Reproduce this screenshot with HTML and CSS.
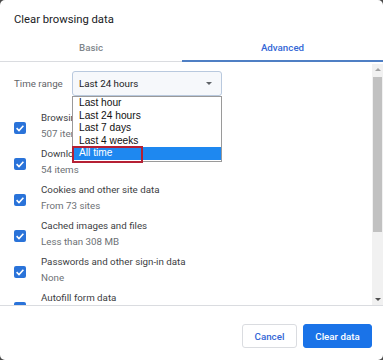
FILE: index.html
```html
<!DOCTYPE html>
<html>
<head>
<meta charset="utf-8">
<link rel="stylesheet" href="styles.css">
</head>
<body>
<div class="dialog">
  <div class="title">Clear browsing data</div>
  <div class="tabs">
    <div class="tab">Basic</div>
    <div class="tab active">Advanced</div>
  </div>
  <div class="body">
    <div class="content">
      <div class="range-row">
        <span class="range-label">Time range</span>
        <div class="select-wrap">
          <div class="select">
            <span>Last 24 hours</span>
            <span class="arrow"></span>
          </div>
          <ul class="dropdown">
            <li>Last hour</li>
            <li>Last 24 hours</li>
            <li>Last 7 days</li>
            <li>Last 4 weeks</li>
            <li class="hl">All time</li>
          </ul>
          <div class="mark"></div>
        </div>
      </div>
      <div class="item">
        <span class="cb"><svg viewBox="0 0 12 12"><path d="M2.6 6.2 L5 8.5 L9.4 3.8" /></svg></span>
        <div class="txt"><div class="t">Browsing history</div><div class="s">507 items</div></div>
      </div>
      <div class="item">
        <span class="cb"><svg viewBox="0 0 12 12"><path d="M2.6 6.2 L5 8.5 L9.4 3.8" /></svg></span>
        <div class="txt"><div class="t">Download history</div><div class="s">54 items</div></div>
      </div>
      <div class="item">
        <span class="cb"><svg viewBox="0 0 12 12"><path d="M2.6 6.2 L5 8.5 L9.4 3.8" /></svg></span>
        <div class="txt"><div class="t">Cookies and other site data</div><div class="s">From 73 sites</div></div>
      </div>
      <div class="item">
        <span class="cb"><svg viewBox="0 0 12 12"><path d="M2.6 6.2 L5 8.5 L9.4 3.8" /></svg></span>
        <div class="txt"><div class="t">Cached images and files</div><div class="s">Less than 308 MB</div></div>
      </div>
      <div class="item">
        <span class="cb"><svg viewBox="0 0 12 12"><path d="M2.6 6.2 L5 8.5 L9.4 3.8" /></svg></span>
        <div class="txt"><div class="t">Passwords and other sign-in data</div><div class="s">None</div></div>
      </div>
      <div class="item">
        <span class="cb"><svg viewBox="0 0 12 12"><path d="M2.6 6.2 L5 8.5 L9.4 3.8" /></svg></span>
        <div class="txt"><div class="t">Autofill form data</div><div class="s"></div></div>
      </div>
    </div>
    <div class="scrollbar">
      <div class="sb-btn"><span class="up"></span></div>
      <div class="sb-track"><div class="sb-thumb"></div></div>
      <div class="sb-btn"><span class="down"></span></div>
    </div>
  </div>
  <div class="footer">
    <button class="btn cancel">Cancel</button>
    <button class="btn primary">Clear data</button>
  </div>
</div>
</body>
</html>
```
FILE: styles.css
```css
html, body {
  margin: 0;
  padding: 0;
  background: #4a4a4a;
}
.dialog {
  width: 383px;
  height: 360px;
  background: #fff;
  border-radius: 5px;
  overflow: hidden;
  font-family: Roboto, "Liberation Sans", sans-serif;
  color: #202124;
  display: flex;
  flex-direction: column;
}
.title {
  font-size: 11.25px;
  line-height: 14px;
  padding: 13px 0 5px 14px;
  height: 14px;
}
.tabs {
  display: grid;
  grid-template-columns: 182px 1fr;
  height: 30px;
}
.tab {
  font-size: 9.75px;
  font-weight: 500;
  color: #80868b;
  display: flex;
  align-items: center;
  justify-content: center;
  box-shadow: inset 0 -1px #dadce0;
}
.tab.active {
  color: #3367d6;
  box-shadow: inset 0 -2px #4f7fc4;
}
.body {
  height: 242px;
  display: flex;
  overflow: hidden;
  margin-top: 1px;
}
.content {
  flex: 1;
  padding: 8px 0 0 14px;
  overflow: hidden;
}
.range-row {
  display: flex;
  align-items: center;
  height: 25px;
  margin-bottom: 10px;
}
.range-label {
  font-size: 9.75px;
  color: #5f6368;
  width: 58px;
}
.select-wrap {
  position: relative;
}
.select {
  width: 133px;
  height: 23px;
  border: 1px solid #b9c9de;
  border-radius: 3px;
  background: #f6f8fb;
  display: flex;
  align-items: center;
  justify-content: space-between;
  padding: 0 9px 0 6px;
  font-size: 9.75px;
  color: #202124;
}
.arrow {
  width: 0;
  height: 0;
  border-left: 3px solid transparent;
  border-right: 3px solid transparent;
  border-top: 3px solid #5f6368;
}
.dropdown {
  position: absolute;
  left: 0;
  top: 25px;
  width: 148px;
  margin: 0;
  padding: 0 0 1px 0;
  list-style: none;
  background: #fff;
  border: 1px solid #9a9a9a;
  font-family: "Liberation Sans", Arial, sans-serif;
  font-size: 10.2px;
  color: #111;
  z-index: 2;
}
.dropdown li {
  height: 12.5px;
  line-height: 12.5px;
  padding-left: 6px;
}
.dropdown li.hl {
  background: #1e88f0;
  color: #fff;
}
.mark {
  position: absolute;
  left: 0;
  top: 75px;
  width: 67px;
  height: 13px;
  border: 2px solid #b52034;
  z-index: 3;
}
.item {
  display: flex;
  align-items: flex-start;
  height: 36px;
  box-sizing: border-box;
  padding-top: 4px;
}
.cb {
  width: 12px;
  height: 12px;
  border-radius: 2px;
  background: #2a73d9;
  margin-top: 12px;
  margin-right: 15px;
  flex: none;
}
.cb svg {
  display: block;
  width: 12px;
  height: 12px;
  fill: none;
  stroke: #fff;
  stroke-width: 1.6;
}
.txt .t {
  font-size: 9.75px;
  line-height: 16px;
  color: #3c4043;
}
.txt .s {
  font-size: 9.75px;
  line-height: 15px;
  color: #6d7175;
}
.scrollbar {
  width: 11px;
  background: #f1f1f1;
  display: flex;
  flex-direction: column;
  margin-top: 1px;
}
.sb-btn {
  height: 11px;
  display: flex;
  align-items: center;
  justify-content: center;
}
.up {
  border-left: 3px solid transparent;
  border-right: 3px solid transparent;
  border-bottom: 3px solid #a3a3a3;
}
.down {
  border-left: 3px solid transparent;
  border-right: 3px solid transparent;
  border-top: 3px solid #505050;
}
.sb-track {
  flex: 1;
  padding: 2px 1px 0 1px;
}
.sb-thumb {
  height: 155px;
  background: #c1c1c1;
}
.footer {
  border-top: 1px solid #dadce0;
  display: flex;
  justify-content: flex-end;
  gap: 6px;
  padding: 18px 11px 0 0;
}
.btn {
  height: 24px;
  border-radius: 3px;
  font-family: Roboto, "Liberation Sans", sans-serif;
  font-size: 9.75px;
  font-weight: 500;
  padding: 0;
  cursor: pointer;
}
.cancel {
  width: 55px;
  background: #fff;
  border: 1px solid #dadce0;
  color: #3367d6;
}
.primary {
  width: 69px;
  background: #1a73e8;
  border: 1px solid #1a73e8;
  color: #fff;
}
```
